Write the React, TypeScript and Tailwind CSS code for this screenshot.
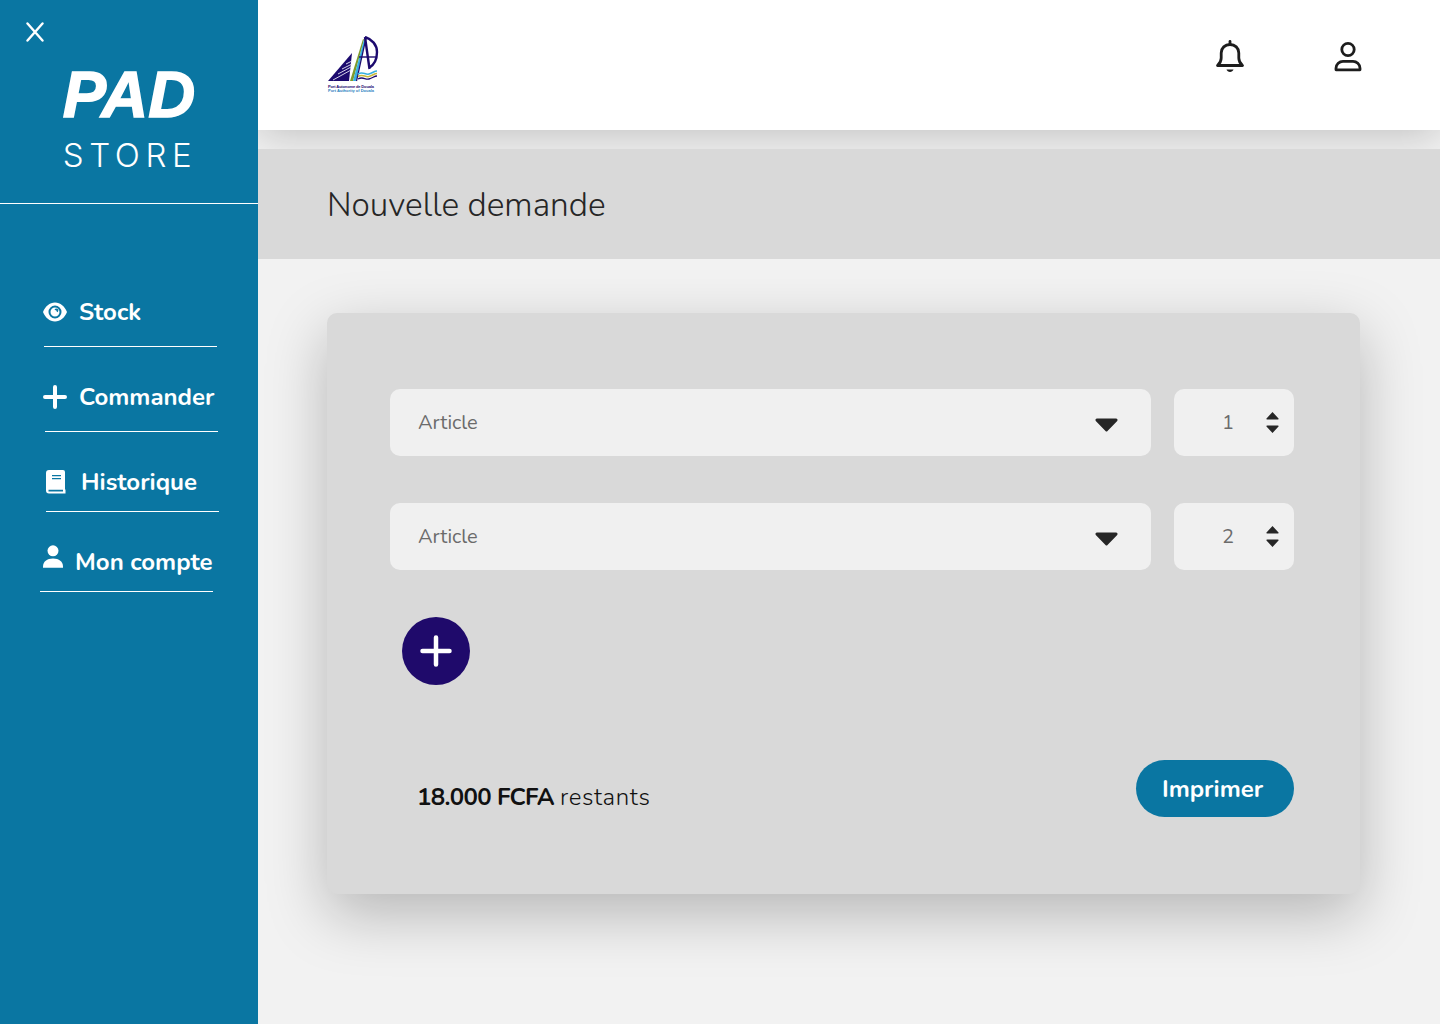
import React from 'react';

const FONT = "font-['Nunito','Lato','Noto_Sans',sans-serif]";

function EyeIcon() {
  return (
    <svg width="24" height="20" viewBox="0 0 24 20" className="shrink-0">
      <path
        fill="#fff"
        fillRule="evenodd"
        d="M12 .5C6.600.5 2.200 4.500 0 10c2.200 5.500 6.600 9.500 12 9.500S21.800 15.500 24 10C21.800 4.500 17.400.5 12 .5ZM12 3.500a6.500 6.500 0 1 1 0 13a6.500 6.500 0 0 1 0-13Z"
      />
      <path fill="#fff" fillRule="evenodd" d="M12 5.500a4.500 4.500 0 1 0 0 9a4.500 4.500 0 0 0 0-9Zm-.5 2.200a2 2 0 1 1 2.600 2.600a3 3 0 0 0-2.600-2.600Z" />
    </svg>
  );
}

function PlusIcon() {
  return (
    <svg width="24" height="24" viewBox="0 0 24 24" className="shrink-0">
      <path d="M12 2v20M2 12h20" stroke="#fff" strokeWidth="4" strokeLinecap="round" />
    </svg>
  );
}

function BookIcon() {
  return (
    <svg width="20" height="24" viewBox="0 0 20 24" className="shrink-0">
      <path
        fill="#fff"
        fillRule="evenodd"
        d="M3 0h14a2 2 0 0 1 2 2v17.500h.5V23.500H3a3 3 0 0 1-3-3V3a3 3 0 0 1 3-3ZM2.500 19.800v1.700H17v-1.700ZM6 5v1.300h9V5Zm0 3v1.300h9V8Z"
      />
    </svg>
  );
}

function PersonIcon() {
  return (
    <svg width="20" height="24" viewBox="0 0 20 24" className="shrink-0 -mt-[10px]">
      <circle cx="10" cy="5.800" r="5.500" fill="#fff" />
      <path fill="#fff" d="M0 21.500c0-4.800 4-8 10-8s10 3.200 10 8v1.300H0Z" />
    </svg>
  );
}

function BellIcon() {
  return (
    <svg width="30" height="34" viewBox="0 0 30 34" fill="none" stroke="#1d1d1d" strokeWidth="2.800" strokeLinejoin="round">
      <path d="M2.500 25.500c2-1.800 3.700-3.500 3.700-7.500v-5c0-5 3.800-8.500 8.800-8.500s8.800 3.500 8.800 8.500v5c0 4 1.700 5.700 3.700 7.500Z" />
      <path d="M15 1.500v2.500" strokeLinecap="round" />
      <path d="M11.500 29.500h7c-.5 1.600-1.900 2.500-3.500 2.500s-3-.9-3.500-2.500Z" fill="#1d1d1d" stroke="none" />
    </svg>
  );
}

function UserIcon() {
  return (
    <svg width="28" height="32" viewBox="0 0 28 32" fill="none" stroke="#1d1d1d" strokeWidth="2.800" strokeLinejoin="round">
      <circle cx="14" cy="8.500" r="6.200" />
      <path d="M2 28.800v-1.500c0-4.200 3.500-7 7-7h10c3.500 0 7 2.800 7 7v1.500Z" />
    </svg>
  );
}

function Logo() {
  return (
    <svg width="52" height="58" viewBox="0 0 52 58" className="shrink-0">
      {/* hull stripes */}
      <path fill="#1c0a6e" d="M1 45 25 17l-3 28Z" />
      <path stroke="#e9e9f5" strokeWidth=".9" d="M6 44 24 34M11 38l13-7M15 33l10-5M19 28l6-3" />
      {/* sail legs */}
      <path fill="#7f9a2c" d="M23 45 36 3l1 .5L26 45Z" />
      <path fill="#35b0e0" d="M26 45 37 3.500l1.500.5L29 45Z" />
      <path fill="none" stroke="#1c0a6e" strokeWidth="1.200" d="M29.500 45 39 2" />
      {/* letter A */}
      <path fill="none" stroke="#1c0a6e" strokeWidth="2.400" d="M38 1c7 2 12 8 12 15 0 8-3 13-8 16 M38 1l4.500 32" />
      <path fill="none" stroke="#1c0a6e" strokeWidth="1.400" d="M32 21h18" />
      {/* waves */}
      <path fill="none" stroke="#35b0e0" strokeWidth="1.500" d="M31 38c5-3 7 1 11 0s5-3 8-3" />
      <path fill="none" stroke="#c9b83a" strokeWidth="1.500" d="M31 40.500c5-3 7 1 11 0s5-3 8-3" />
      <path fill="none" stroke="#1c0a6e" strokeWidth="1.300" d="M31 43c5-3 7 1 11 0s5-3 8-3" />
      <text x="1" y="51.500" fontSize="4" fontWeight="700" fill="#1c0a6e" textLength="46" fontFamily="Liberation Sans">Port Autonome de Douala</text>
      <text x="1" y="56" fontSize="4" fontWeight="700" fill="#2a7fc0" textLength="46" fontFamily="Liberation Sans">Port Authority of Douala</text>
    </svg>
  );
}

function NavItem({ icon, label, gap, rowClass, lineClass }: { icon: React.ReactNode; label: string; gap: string; rowClass: string; lineClass: string }) {
  return (
    <div className="flex flex-col">
      <div className={`flex items-center text-white text-[24px] leading-[32px] font-bold ${gap} ${rowClass}`}>
        {icon}
        <span>{label}</span>
      </div>
      <div className={`h-px w-[173px] bg-white ${lineClass}`} />
    </div>
  );
}

function Stepper({ value }: { value: number }) {
  return (
    <div className="w-[120px] h-[67px] shrink-0 rounded-[10px] bg-[#f0f0f0] flex items-center justify-end pr-[15px]">
      <span className="text-[20px] text-[#6b6b6b] mr-[32px]">{value}</span>
      <svg width="13" height="21" viewBox="0 0 13 21" fill="#262626">
        <path d="M6.500 0 12.500 6.500a.6.6 0 0 1-.4 1H.9a.6.6 0 0 1-.4-1Z" />
        <path d="M6.500 21 12.500 14.500a.6.6 0 0 0-.4-1H.9a.6.6 0 0 0-.4 1Z" />
      </svg>
    </div>
  );
}

function ArticleRow({ value }: { value: number }) {
  return (
    <div className="flex items-center gap-[23px]">
      <div className="flex-1 h-[67px] rounded-[10px] bg-[#f0f0f0] flex items-center justify-between pl-[28px] pr-[33px]">
        <span className="text-[20px] text-[#6b6b6b]">Article</span>
        <svg width="23" height="14" viewBox="0 0 23 14" fill="#262626" className="mt-[4px]">
          <path d="M2 0.500h19a1.500 1.500 0 0 1 1.200 2.400L12.500 13a1.400 1.400 0 0 1-2 0L.8 2.900A1.500 1.500 0 0 1 2 .5Z" />
        </svg>
      </div>
      <Stepper value={value} />
    </div>
  );
}

export default function App() {
  return (
    <div className={`flex w-[1440px] h-[1024px] overflow-hidden bg-[#f2f2f2] ${FONT}`}>
      {/* Sidebar */}
      <aside className="relative z-10 w-[258px] shrink-0 bg-[#0a76a2] flex flex-col">
        <div className="h-[204px] border-b border-white flex flex-col">
          <svg width="18" height="20" viewBox="0 0 18 20" className="ml-[26px] mt-[22px]">
            <path d="M1.500 1.500l15 17M16.500 1.500l-15 17" stroke="#fff" strokeWidth="2.400" strokeLinecap="round" />
          </svg>
          <div className="mt-[19px] text-center text-white text-[65px] leading-[68px] font-bold italic font-['Liberation_Sans',sans-serif] [-webkit-text-stroke:1.5px_white]">PAD</div>
          <div className="mt-[6px] text-center text-white text-[33px] leading-[40px] tracking-[0.17em] font-light font-['Inter',sans-serif] pl-[2px]">STORE</div>
        </div>
        <nav className="pt-[92px] flex flex-col">
          <NavItem icon={<EyeIcon />} label="Stock" gap="gap-[12px]" rowClass="ml-[43px] h-[32px]" lineClass="ml-[44px] mt-[18px]" />
          <NavItem icon={<PlusIcon />} label="Commander" gap="gap-[12px]" rowClass="ml-[43px] mt-[34px] h-[32px]" lineClass="ml-[45px] mt-[18px]" />
          <NavItem icon={<BookIcon />} label="Historique" gap="gap-[15px]" rowClass="ml-[46px] mt-[34px] h-[32px]" lineClass="ml-[46px] mt-[13px]" />
          <NavItem icon={<PersonIcon />} label="Mon compte" gap="gap-[12px]" rowClass="ml-[43px] mt-[34px] h-[32px]" lineClass="ml-[40px] mt-[13px]" />
        </nav>
      </aside>

      {/* Main */}
      <main className="flex-1 flex flex-col min-w-0">
        <header className="relative h-[130px] shrink-0 bg-white shadow-[0_4px_40px_rgba(0,0,0,0.22)] flex items-center justify-between pl-[69px] pr-[78px]">
          <Logo />
          <div className="flex items-center gap-[89px] -mt-[17px]">
            <BellIcon />
            <UserIcon />
          </div>
        </header>
        <div className="relative mt-[19px] h-[110px] shrink-0 bg-[#d9d9d9] flex items-center pl-[69px]">
          <h1 className="text-[33.400px] font-light text-[#262626] mt-[3px]">Nouvelle demande</h1>
        </div>
        <section className="mt-[54px] ml-[69px] w-[1033px] h-[581px] rounded-[10px] bg-[#d9d9d9] shadow-[0_20px_60px_rgba(0,0,0,0.25)] pt-[76px] pl-[63px] pr-[66px] flex flex-col">
          <div className="flex flex-col gap-[47px]">
            <ArticleRow value={1} />
            <ArticleRow value={2} />
          </div>
          <div className="mt-[47px] ml-[12px] w-[68px] h-[68px] rounded-full bg-[#1f0a6b] flex items-center justify-center">
            <svg width="32" height="32" viewBox="0 0 32 32">
              <path d="M16 2.500v27M2.500 16h27" stroke="#fff" strokeWidth="4.500" strokeLinecap="round" />
            </svg>
          </div>
          <div className="mt-[75px] flex items-start justify-between">
            <p className="ml-[27px] mt-[20px] text-[24px] leading-[34px] text-[#111]">
              <span className="font-bold tracking-[-0.027em]">18.000 FCFA</span>{' '}
              <span className="font-light tracking-[0.025em]">restants</span>
            </p>
            <button className="w-[158px] h-[57px] rounded-full bg-[#0a76a2] text-white text-[24px] font-bold pr-[5px]">Imprimer</button>
          </div>
        </section>
      </main>
    </div>
  );
}
